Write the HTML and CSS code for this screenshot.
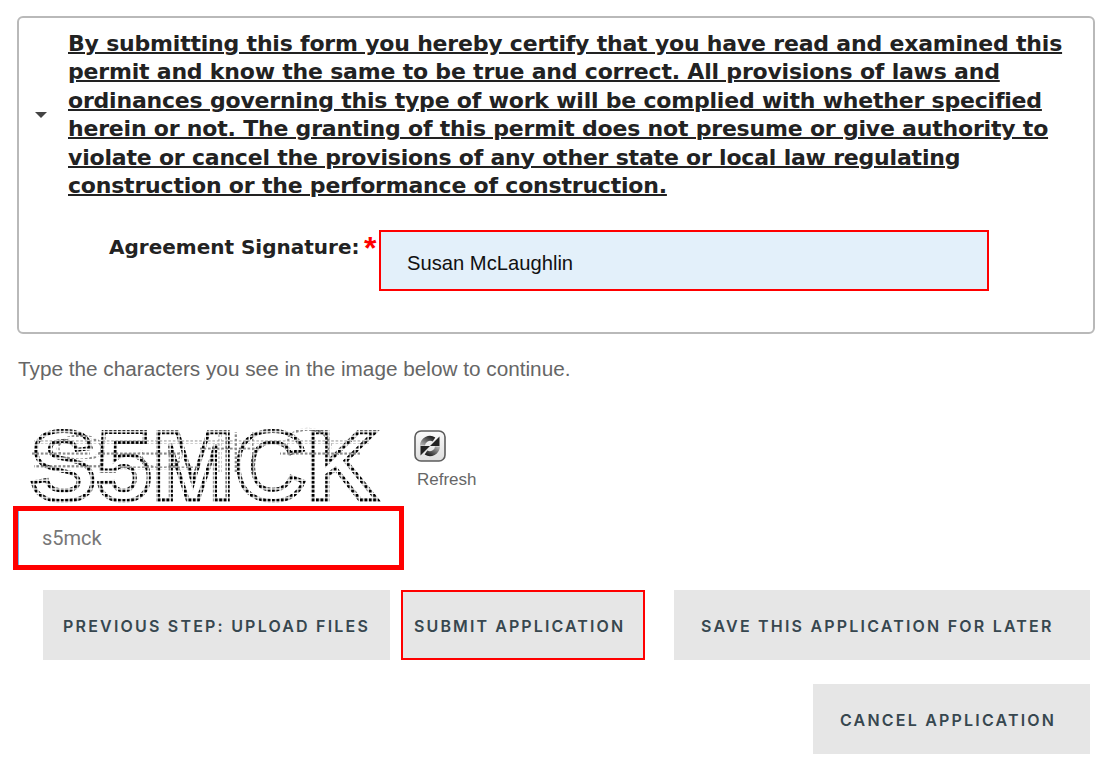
FILE: index.html
```html
<!DOCTYPE html>
<html lang="en">
<head>
<meta charset="utf-8">
<title>Submit Application</title>
<link rel="stylesheet" href="styles.css">
</head>
<body>
<section class="card">
  <div class="terms">
    <span class="caret"></span>
    <p class="terms-text">By submitting this form you hereby certify that you have read and examined this permit and know the same to be true and correct. All provisions of laws and ordinances governing this type of work will be complied with whether specified herein or not. The granting of this permit does not presume or give authority to violate or cancel the provisions of any other state or local law regulating construction or the performance of construction.</p>
  </div>
  <div class="signature">
    <label class="sig-label" for="sig">Agreement Signature:</label>
    <span class="req">*</span>
    <input class="sig-input" id="sig" value="Susan McLaughlin">
  </div>
</section>
<p class="hint">Type the characters you see in the image below to continue.</p>
<div class="captcha-row">
  <svg class="captcha" width="350" height="78" viewBox="0 0 350 78">
    <defs>
      <pattern id="dots" width="4.400" height="4.400" patternUnits="userSpaceOnUse">
        <rect width="3" height="3" fill="#000"></rect>
      </pattern>
      <pattern id="dots-soft" x="2" y="2" width="4.400" height="4.400" patternUnits="userSpaceOnUse">
        <rect width="2.600" height="2.600" fill="#555"></rect>
      </pattern>
    </defs>
    <path class="captcha-noise" d="M4 14H340M2 26H60M72 26H150M170 20H230M250 26H330M4 38H70M90 40H170M28 20a22 12 0 1 0 44 0a22 12 0 1 0-44 0M112 22a20 14 0 1 0 38 0M258 24a22 16 0 1 1 40 0M190 4V44M206 4V44M222 4V44"></path>
    <text class="captcha-text" x="0" y="72" textLength="348" lengthAdjust="spacingAndGlyphs">S5MCK</text>
  </svg>
  <div class="refresh">
    <svg class="refresh-icon" width="32" height="32" viewBox="0 0 32 32">
      <defs>
        <linearGradient id="tile" x1="0" y1="0" x2="0" y2="1">
          <stop offset="0" stop-color="#fafafa"></stop>
          <stop offset="1" stop-color="#dedede"></stop>
        </linearGradient>
        <linearGradient id="arrow" x1="0" y1="1" x2="1" y2="0">
          <stop offset="0" stop-color="#b0b0b0"></stop>
          <stop offset="1" stop-color="#222"></stop>
        </linearGradient>
      </defs>
      <rect x="1" y="1" width="30" height="30" rx="6" fill="url(#tile)" stroke="#5c5c5c" stroke-width="1.600"></rect>
      <path d="M8.500 15.500A7.500 7.500 0 0 1 20 9.500" fill="none" stroke="url(#arrow)" stroke-width="5"></path>
      <path d="M25.500 6.500V16H16z" fill="#222"></path>
      <g transform="rotate(180 16 16)">
        <path d="M8.500 15.500A7.500 7.500 0 0 1 20 9.500" fill="none" stroke="url(#arrow)" stroke-width="5"></path>
        <path d="M25.500 6.500V16H16z" fill="#222"></path>
      </g>
    </svg>
    <span class="refresh-label">Refresh</span>
  </div>
</div>
<input class="captcha-input" value="s5mck">
<div class="actions">
  <button class="btn btn-prev">PREVIOUS STEP: UPLOAD FILES</button>
  <button class="btn btn-submit">SUBMIT APPLICATION</button>
  <button class="btn btn-save">SAVE THIS APPLICATION FOR LATER</button>
  <button class="btn btn-cancel">CANCEL APPLICATION</button>
</div>
</body>
</html>
```
FILE: styles.css
```css
* { box-sizing: border-box; }
html, body { margin: 0; padding: 0; background: #fff; }
body { width: 1104px; height: 773px; overflow: hidden; font-family: "Liberation Sans", Arial, sans-serif; color: #333; }
.card {
  margin: 16px 10px 0 17px;
  width: 1078px;
  height: 318px;
  border: 2px solid #b9b9b9;
  border-radius: 6px;
  padding: 12px 0 0 16px;
}
.terms { display: flex; align-items: center; }
.caret {
  width: 0; height: 0;
  border-left: 6px solid transparent;
  border-right: 6px solid transparent;
  border-top: 6px solid #444;
  margin-right: 21px;
  flex: none;
}
.terms-text {
  margin: 0;
  width: 1010px;
  font: bold 22px/28.4px "DejaVu Sans", Verdana, sans-serif;
  letter-spacing: -0.2px;
  text-decoration: underline;
  text-decoration-thickness: 2px;
  color: #222;
}
.signature { display: flex; align-items: flex-start; margin: 30px 0 0 74px; }
.sig-label {
  width: 252px;
  white-space: nowrap;
  padding-top: 4px;
  font: bold 20px/26px "DejaVu Sans", Verdana, sans-serif;
  color: #222;
}
.req { width: 18px; padding: 2px 0 0 3px; color: #f00; font: bold 32px/32px "Liberation Sans", sans-serif; }
.sig-input {
  width: 610px; height: 61px;
  border: 2px solid #f00;
  background: #e3f0fa;
  padding: 5px 0 0 26px;
  font: 20.2px "Liberation Sans", Arial, sans-serif;
  color: #111;
  outline: none;
}
.hint { margin: 22px 0 0 18px; font: 20.750px/26px "Liberation Sans", Arial, sans-serif; color: #666; }
.captcha-row { display: flex; align-items: flex-start; margin: 46px 0 0 30px; height: 78px; }
.captcha { display: block; flex: none; overflow: visible; }
.captcha-text {
  font: bold 98px "Liberation Sans", sans-serif;
  fill: none;
  stroke: url(#dots);
  stroke-width: 4;
}
.captcha-noise {
  fill: none;
  stroke: url(#dots-soft);
  stroke-width: 3;
  opacity: 0.7;
}
.refresh { display: flex; flex-direction: column; margin-left: 34px; }
.refresh-icon { display: block; margin-top: 2px; }
.refresh-label { margin: 8px 0 0 3px; font: 17px/20px "Liberation Sans", sans-serif; color: #666; }
.captcha-input {
  display: block;
  margin: 0 0 0 13px;
  width: 391px; height: 64px;
  border: 5px solid #f00;
  padding: 0 0 0 24px;
  font: 20px "Roboto", sans-serif;
  color: #777;
  outline: none;
  background: #fff;
  box-shadow: inset 1px 0 #6db6ee;
}
.actions {
  display: flex; flex-wrap: wrap; justify-content: flex-end;
  row-gap: 24px;
  margin: 20px 14px 0 43px;
}
.btn {
  height: 70px;
  border: 0;
  background: #e6e6e6;
  font: 600 16px "Inter", sans-serif;
  letter-spacing: 2.200px;
  color: #37474f;
  padding: 2px 0 0;
  white-space: nowrap;
  text-align: left;
}
.btn-prev { width: 347px; padding-left: 20px; }
.btn-submit { width: 244px; margin-left: 11px; border: 2px solid #f00; padding: 2px 0 0 11px; letter-spacing: 2.100px; }
.btn-save { width: 416px; margin-left: 29px; padding-left: 27px; }
.btn-cancel { width: 277px; padding-left: 27px; }
```
